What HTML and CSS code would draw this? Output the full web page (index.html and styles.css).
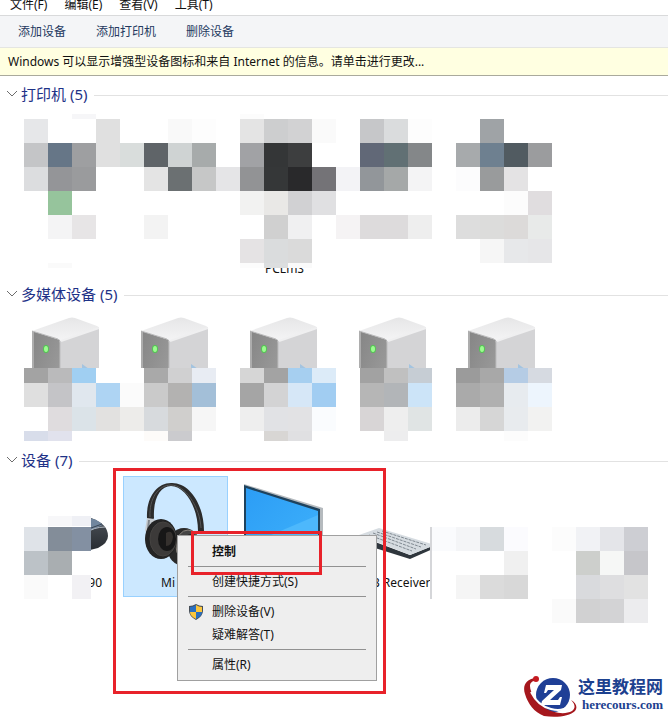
FILE: index.html
```html
<!DOCTYPE html>
<html lang="zh-CN">
<head>
  <meta charset="UTF-8">
  <meta name="viewport" content="width=device-width, initial-scale=1.0">
  <title>设备和打印机</title>
  <link rel="stylesheet" href="styles.css">
</head>
<body>

  <nav class="menubar">
    <button type="button">文件(F)</button>
    <button type="button">编辑(E)</button>
    <button type="button">查看(V)</button>
    <button type="button">工具(T)</button>
  </nav>

  <div class="toolbar">
    <button type="button">添加设备</button>
    <button type="button">添加打印机</button>
    <button type="button">删除设备</button>
  </div>

  <button type="button" class="notice">Windows 可以显示增强型设备图标和来自 Internet 的信息。请单击进行更改...</button>

  <!-- Shared icons -->
  <svg class="defs" aria-hidden="true">
    <defs>
      <linearGradient id="front" x1="0" y1="0" x2="1" y2="1">
        <stop offset="0" stop-color="#858585"/><stop offset="1" stop-color="#a0a0a0"/>
      </linearGradient>
      <linearGradient id="lid" x1="0" y1="0" x2="0" y2="1">
        <stop offset="0" stop-color="#e6e6e7"/><stop offset="1" stop-color="#f4f4f5"/>
      </linearGradient>
      <linearGradient id="screen" x1="0" y1="0" x2="1" y2="1">
        <stop offset="0" stop-color="#2c9df5"/><stop offset="1" stop-color="#3fb2fb"/>
      </linearGradient>
      <linearGradient id="mouse" x1="0" y1="0" x2="0" y2="1">
        <stop offset="0" stop-color="#4b5057"/><stop offset="1" stop-color="#24282d"/>
      </linearGradient>
      <symbol id="tower" viewBox="0 0 105 98">
        <path d="M46 30 85 17V84L46 96Z" fill="#d4d4d6"/>
        <path d="M18 21 55 8Q58 7 61 8L83 16Q85 17 85 18L46 31Z" fill="url(#lid)"/>
        <path d="M18 21 46 30V96L18 84Z" fill="url(#front)"/>
        <path d="M19 22V84" stroke="#adadad" stroke-width="2"/>
        <path d="M18 21 44 29Q46 30 46 33V96" fill="none" stroke="#bcbcbd"/>
        <path d="M47 31 85 18" stroke="#efeff0" stroke-width="2"/>
        <ellipse cx="32" cy="39" rx="3" ry="4" fill="#53c653"/>
        <ellipse cx="32" cy="39" rx="2" ry="3" fill="#9dfc91"/>
        <path d="M68 54 75 59 68 60Z" fill="#a3c4e0"/>
      </symbol>
    </defs>
  </svg>

  <main>
    <section class="group">
      <h2>
        <button type="button" aria-expanded="true">
          <svg class="chevron" viewBox="0 0 12 8"><path d="M1 1 6 6 11 1"/></svg>打印机 (5)
        </button>
      </h2>
      <div class="devices">
        <div class="device"></div>
        <div class="device"></div>
        <div class="device"><div class="icon"></div><span class="label label-long">PCLmS</span></div>
        <div class="device"></div>
        <div class="device"></div>
        <svg class="mosaic" viewBox="0 0 668 170" aria-hidden="true">
          <path d="M24 4H552V158H24Z" fill="#fff"/>
          <g transform="translate(0,4)" class="h5"><rect x="72" fill="#f6f6f8"/><rect x="240" fill="#fcfcfc"/></g>
          <g transform="translate(0,9)">
            <rect x="24" fill="#e6e7e9"/><rect x="96" fill="#e0e0e0"/><rect x="168" fill="#f9f9f9"/><rect x="192" fill="#fdfdfd"/>
            <rect x="240" fill="#e4e4e4"/><rect x="264" fill="#cdcecf"/><rect x="288" fill="#d2d2d3"/><rect x="312" fill="#fafafa"/>
            <rect x="360" fill="#c6c7c9"/><rect x="384" fill="#dadcdd"/><rect x="408" fill="#fdfdfd"/><rect x="480" fill="#9fa3a6"/>
          </g>
          <g transform="translate(0,33)">
            <rect x="24" fill="#c4c5c7"/><rect x="48" fill="#667687"/><rect x="72" fill="#9e9fa1"/><rect x="96" fill="#e0e0e0"/>
            <rect x="120" fill="#d9dddc"/><rect x="144" fill="#5f6468"/><rect x="168" fill="#cfd3d3"/><rect x="192" fill="#a7abab"/>
            <rect x="240" fill="#a1a2a5"/><rect x="264" fill="#343637"/><rect x="288" fill="#3d3e3f"/>
            <rect x="360" fill="#616877"/><rect x="384" fill="#617074"/><rect x="408" fill="#848789"/>
            <rect x="456" fill="#a7aaac"/><rect x="480" fill="#6e8090"/><rect x="504" fill="#515b61"/><rect x="528" fill="#9b9c9e"/>
          </g>
          <g transform="translate(0,57)">
            <rect x="24" fill="#dcdddf"/><rect x="48" fill="#949598"/><rect x="72" fill="#9a9b9d"/><rect x="144" fill="#e4e4e4"/>
            <rect x="168" fill="#6b7072"/><rect x="192" fill="#c6c7c7"/><rect x="216" fill="#e5e5e7"/><rect x="240" fill="#929395"/>
            <rect x="264" fill="#353738"/><rect x="288" fill="#29292b"/><rect x="312" fill="#747377"/><rect x="336" fill="#f3f3f6"/>
            <rect x="360" fill="#92969a"/><rect x="384" fill="#a5a8a8"/><rect x="408" fill="#f4f4f5"/>
            <rect x="456" fill="#fcfcfd"/><rect x="480" fill="#999b9c"/><rect x="504" fill="#e4e3e4"/>
          </g>
          <g transform="translate(0,81)">
            <rect x="48" fill="#96c49c"/><rect x="240" fill="#f2f2f1"/><rect x="264" fill="#e9e8e6"/><rect x="288" fill="#d1d1d3"/>
            <rect x="312" fill="#e0e0e2"/><rect x="504" fill="#fcfcfc"/><rect x="528" fill="#e0dddf"/>
          </g>
          <g transform="translate(0,105)">
            <rect x="48" fill="#f4f4f5"/><rect x="72" fill="#e7e5e6"/><rect x="144" fill="#f3f3f3"/><rect x="264" fill="#d0d0d0"/>
            <rect x="288" fill="#f0f0f1"/><rect x="336" fill="#f5f3f4"/><rect x="360" fill="#dddbdc"/><rect x="384" fill="#dddbdc"/>
            <rect x="408" fill="#eeeeee"/><rect x="456" fill="#dddddd"/><rect x="480" fill="#dcdcdb"/><rect x="504" fill="#dcdad9"/>
            <rect x="528" fill="#e8eae9"/>
          </g>
          <g transform="translate(0,129)">
            <rect x="240" fill="#e5e3e4"/><rect x="264" fill="#dadcdd"/><rect x="288" fill="#dadada"/>
            <rect x="480" fill="#f6f6f6"/><rect x="504" fill="#e7e8ea"/><rect x="528" fill="#e6e6e8"/>
          </g>
          <g transform="translate(0,153)" class="h5"><rect x="48" fill="#fafafa"/><rect x="240" fill="#fcfcfc"/><rect x="264" fill="#dcdedf"/><rect x="288" fill="#fafafa"/></g>
        </svg>
      </div>
    </section>

    <section class="group">
      <h2>
        <button type="button" aria-expanded="true">
          <svg class="chevron" viewBox="0 0 12 8"><path d="M1 1 6 6 11 1"/></svg>多媒体设备 (5)
        </button>
      </h2>
      <div class="devices devices-media">
        <div class="device"><svg class="icon"><use href="#tower"/></svg></div>
        <div class="device"><svg class="icon"><use href="#tower"/></svg></div>
        <div class="device"><svg class="icon"><use href="#tower"/></svg></div>
        <div class="device"><svg class="icon"><use href="#tower"/></svg></div>
        <div class="device"><svg class="icon"><use href="#tower"/></svg></div>
        <svg class="mosaic" viewBox="0 0 668 170" aria-hidden="true">
          <path d="M24 58H552V131H24Z" fill="#fff"/>
          <g transform="translate(0,58)" class="h15">
            <rect x="24" fill="#a3a3a3"/><rect x="48" fill="#bababb"/><rect x="72" fill="#a0cff2"/><rect x="144" fill="#a9a9a9"/>
            <rect x="168" fill="#d0d0d1"/><rect x="192" fill="#e8ecf3"/><rect x="240" fill="#d6d6d6"/><rect x="264" fill="#a3a3a3"/>
            <rect x="288" fill="#a6cff0"/><rect x="312" fill="#dcebf8"/><rect x="360" fill="#a2a2a2"/><rect x="384" fill="#c0c0c0"/>
            <rect x="408" fill="#c6cdd4"/><rect x="456" fill="#9b9b9b"/><rect x="480" fill="#a8a8a8"/><rect x="504" fill="#b5cce5"/>
            <rect x="528" fill="#d6dae1"/>
          </g>
          <g transform="translate(0,73)">
            <rect x="24" fill="#dfdfdf"/><rect x="48" fill="#c4c4c7"/><rect x="72" fill="#e0e7ee"/><rect x="96" fill="#aed4f3"/>
            <rect x="120" fill="#fbfbfb"/><rect x="144" fill="#cacaca"/><rect x="168" fill="#b3b2b1"/><rect x="192" fill="#a3bfd8"/>
            <rect x="240" fill="#a5a5a5"/><rect x="264" fill="#d3d3d4"/><rect x="288" fill="#d6e7f7"/><rect x="312" fill="#a1cdf2"/>
            <rect x="360" fill="#b6b6b6"/><rect x="384" fill="#b2b5b8"/><rect x="408" fill="#cce4f8"/>
            <rect x="456" fill="#aaaaaa"/><rect x="480" fill="#b0b0b0"/><rect x="504" fill="#e7ebef"/><rect x="528" fill="#edf5fd"/>
          </g>
          <g transform="translate(0,97)">
            <rect x="48" fill="#dfdcde"/><rect x="72" fill="#dbe3e8"/><rect x="96" fill="#e2e1e0"/><rect x="120" fill="#edecea"/>
            <rect x="144" fill="#d7dadd"/><rect x="168" fill="#d0cfcd"/><rect x="192" fill="#f6f6f6"/><rect x="240" fill="#eeeeee"/>
            <rect x="264" fill="#e1e2e5"/><rect x="288" fill="#e2e2e4"/><rect x="312" fill="#fafcfe"/><rect x="360" fill="#d8d5d6"/>
            <rect x="384" fill="#eeeeee"/><rect x="408" fill="#e0e4e4"/><rect x="456" fill="#ececec"/><rect x="480" fill="#d6d6d6"/>
            <rect x="504" fill="#e8ebee"/><rect x="528" fill="#f2f2f1"/>
          </g>
          <g transform="translate(0,121)" class="h10">
            <rect x="24" fill="#d8ddea"/><rect x="48" fill="#e1e2ed"/><rect x="144" fill="#fdfbf9"/><rect x="168" fill="#cbcbce"/>
            <rect x="264" fill="#d8d6d4"/><rect x="288" fill="#e0e0e2"/><rect x="384" fill="#ededee"/><rect x="504" fill="#fcfcfc"/>
          </g>
        </svg>
      </div>
    </section>

    <section class="group">
      <h2>
        <button type="button" aria-expanded="true">
          <svg class="chevron" viewBox="0 0 12 8"><path d="M1 1 6 6 11 1"/></svg>设备 (7)
        </button>
      </h2>
      <div class="devices devices-other">
        <div class="device">
          <svg class="icon" viewBox="0 0 105 98">
            <path d="M60 48Q66 42 77 42 94 48 94 60 94 67 84 72L60 78Z" fill="url(#mouse)"/>
            <path d="M70 43Q80 40 89 49L72 56Z" fill="#71869e"/>
            <path d="M72 57Q80 51 91 51" fill="none" stroke="#b4bdc7"/>
            <path d="M77 52 88 48" stroke="#3a4654"/>
          </svg>
          <span class="label label-end">90</span>
        </div>
        <div class="device selected">
          <svg class="icon" viewBox="0 0 105 98">
            <path d="M24 42C23 23 33 7 48 7 66 6 81 28 81 55L75 55C75 31 62 10 48 10 37 10 30 23 31 42L30 44 24 43Z" fill="#2c2c2c"/>
            <path d="M27 41C26 23 35 9 48 9 62 9 77 31 78 52" fill="none" stroke="#565656"/>
            <path d="M24 42 31 43 34 48 24 58 22 54Z" fill="#c7ccd1"/>
            <path d="M26 44 25 53" stroke="#80868c" stroke-width="2"/>
            <ellipse cx="61" cy="71" rx="17" ry="19" fill="#292929"/>
            <ellipse cx="65" cy="70" rx="12" ry="16" fill="#444" stroke="#88837c"/>
            <ellipse cx="68" cy="71" rx="9" ry="13" fill="#222"/>
            <ellipse cx="38" cy="63" rx="16" ry="20" fill="#242424"/>
            <ellipse cx="40" cy="63" rx="13" ry="17" fill="#3c3a39" stroke="#454341"/>
            <ellipse cx="44" cy="63" rx="9" ry="12" fill="#171717"/>
            <path d="M43 57Q49 53 50 61 49 70 43 70Z" fill="#35312e"/>
          </svg>
          <span class="label label-start">Mi</span>
        </div>
        <div class="device">
          <svg class="icon" viewBox="0 0 105 98">
            <path d="M12 8 91 32V90L12 76Z" fill="#b5babe"/>
            <path d="M12 9 88 33V88L12 76Z" fill="#1e425d"/>
            <path d="M14 12 86 35V86L14 75Z" fill="url(#screen)"/>
            <path d="M25 65 86 39V86L14 75V70Z" fill="#4db8fc"/>
          </svg>
        </div>
        <div class="device">
          <svg class="icon" viewBox="0 0 105 98">
            <path d="M18 60 69 79 94 69V72L69 83 18 67Z" fill="#2f363d"/>
            <path d="M18 59 38 52 94 69 69 79Z" fill="#d6dce1"/>
            <path d="M28 59 71 75M32 57 75 73M36 56 80 71M41 55 85 69" stroke="#808991" stroke-dasharray="3 1"/>
          </svg>
          <span class="label">USB Receiver</span>
        </div>
        <svg class="mosaic" viewBox="0 0 668 170" aria-hidden="true">
          <path d="M24 40H91V123H24ZM431 51H528V123H431Z" fill="#fff"/>
          <path d="M430 51H432V123H430Z" fill="#d5d6d9"/>
          <g transform="translate(0,40)" class="h10"><rect x="48" fill="#f7f7f9"/><rect x="72" class="cut" fill="#eff0f5"/></g>
          <g transform="translate(0,51)">
            <rect x="24" fill="#dfe3e8"/><rect x="48" fill="#838d99"/><rect x="72" class="cut" fill="#8390a2"/>
            <rect x="432" fill="#fafbfd"/><rect x="456" fill="#f4f5f7"/><rect x="480" fill="#d7dbde"/><rect x="504" fill="#fbfbfe"/>
            <rect x="552" fill="#fcfcfc"/><rect x="576" fill="#f1f2f5"/><rect x="600" fill="#e4e5e9"/><rect x="624" fill="#cdced3"/>
          </g>
          <g transform="translate(0,75)">
            <rect x="24" fill="#bcc2c7"/><rect x="48" fill="#a9aeb1"/><rect x="504" fill="#f0f0f0"/>
            <rect x="576" fill="#cdcfcc"/><rect x="600" fill="#f6f7f6"/><rect x="624" fill="#c6c6ca"/>
          </g>
          <g transform="translate(0,99)">
            <rect x="24" fill="#fafafa"/><rect x="72" class="cut" fill="#f2f1f4"/>
            <rect x="456" fill="#f5f5f5"/><rect x="480" fill="#dbdbdb"/><rect x="504" fill="#d8d8d8"/>
            <rect x="576" fill="#d9dadd"/><rect x="600" fill="#dedee0"/><rect x="624" fill="#e2e2e2"/>
          </g>
          <g transform="translate(0,123)">
            <rect x="552" fill="#fafafa"/><rect x="576" fill="#d1d1d2"/><rect x="600" fill="#d3d3d5"/><rect x="624" fill="#ececee"/>
          </g>
        </svg>

        <!-- Right-click menu -->
        <div class="context-menu" role="menu">
          <button type="button" role="menuitem" class="default">控制</button>
          <hr>
          <button type="button" role="menuitem">创建快捷方式(S)</button>
          <hr>
          <button type="button" role="menuitem">
            <svg class="shield" viewBox="0 0 14 16">
              <path d="M7 0Q10 2 14 2V7Q14 12 7 16 0 12 0 7V2Q4 2 7 0Z" fill="#474f58"/>
              <path d="M7 1V8H1V3Q4 3 7 1Z" fill="#2a6fc0"/>
              <path d="M7 1Q10 3 13 3V8H7Z" fill="#fbc63c"/>
              <path d="M1 8H7V15Q1 12 1 8Z" fill="#fbc63c"/>
              <path d="M7 8H13Q13 12 7 15Z" fill="#2a6fc0"/>
            </svg>删除设备(V)
          </button>
          <button type="button" role="menuitem">疑难解答(T)</button>
          <hr>
          <button type="button" role="menuitem">属性(R)</button>
        </div>

        <div class="mark mark-outer"></div>
        <div class="mark mark-inner"></div>
      </div>
    </section>
  </main>

  <footer class="brand">
    <svg class="brand-logo" viewBox="0 0 58 42" aria-hidden="true">
      <circle cx="33" cy="20" r="17" fill="#1f3f96"/>
      <path d="M15 3C7 4 2 10 5 19 8 29 14 37 24 41 37 43 50 41 55 36 58 32 56 28 51 25 55 29 56 33 52 36 45 40 33 38 25 33 17 27 10 18 10 11 10 8 12 6 15 6Z" fill="#a5171d"/>
      <path d="M11 17Q18 31 31 34 42 37 49 31" fill="none" stroke="#fff" stroke-width="2"/>
      <circle cx="16" cy="4" r="3" fill="#c41a20"/>
      <path d="M26 10H42L41 15 30 25H38L40 22H42L40 30H21L22 26 34 15H28L26 18H24Z" fill="#fff"/>
    </svg>
    <div class="brand-text">
      <strong>这里教程网</strong>
      <span>herecours.com</span>
    </div>
  </footer>

</body>
</html>
```

FILE: styles.css
```css
* {
  box-sizing: border-box;
}

body {
  margin: 0;
  background: #fff;
  color: #111;
  font-family: 'Noto Sans', 'Noto Sans CJK SC', sans-serif;
  font-size: 12px;
  line-height: 18px;
}

button {
  padding: 0;
  border: none;
  background: none;
  color: inherit;
  font: inherit;
  text-align: left;
  white-space: nowrap;
}

.defs {
  display: block;
  width: 0;
  height: 0;
}

.menubar {
  display: flex;
  align-items: flex-end;
  gap: 17px;
  height: 16px;
  padding: 0 10px 1px;
  border-bottom: 1px solid #d9dadb;
}

.toolbar {
  display: flex;
  align-items: center;
  gap: 30px;
  height: 32px;
  padding: 0 18px;
  background: #f4f5f7;
  border-bottom: 1px solid #e4e5e2;
  color: #24395f;
}

.notice {
  display: block;
  width: 100%;
  height: 28px;
  padding: 0 8px;
  background: #ffffe1;
  border-bottom: 1px solid #aaaa9c;
  overflow: hidden;
}

main {
  padding-top: 4px;
}

.group h2 {
  display: flex;
  align-items: center;
  gap: 7px;
  height: 30px;
  margin: 0;
  padding-left: 6px;
  color: #1e3287;
  font-size: 15px;
  font-weight: normal;
}

.group h2::after {
  content: '';
  flex: 1;
  height: 1px;
  background: #e2e2e2;
}

.group h2 button {
  display: flex;
  align-items: center;
  gap: 3px;
  padding-bottom: 2px;
}

.chevron {
  width: 12px;
  height: 8px;
  fill: none;
  stroke: #6d6d6d;
}

.devices {
  position: relative;
  display: flex;
  align-items: flex-start;
  gap: 4px;
  min-height: 170px;
  padding-left: 14px;
}

.devices-media {
  min-height: 136px;
}

.devices-other {
  min-height: 199px;
}

.device {
  display: flex;
  flex: none;
  flex-direction: column;
  width: 105px;
  min-height: 121px;
}

.device.selected {
  background: #cce8ff;
  box-shadow: inset 0 0 0 1px #99d1ff;
}

.icon {
  display: block;
  width: 105px;
  height: 98px;
}

.label {
  text-align: center;
}

.label-start {
  padding-left: 38px;
  text-align: left;
}

.label-end {
  padding-right: 17px;
  text-align: right;
}

.label-long {
  padding-top: 52px;
}

/* pixelated cover over device names */
.mosaic {
  position: absolute;
  top: 0;
  left: 0;
  width: 668px;
  height: 170px;
  shape-rendering: crispEdges;
  pointer-events: none;
}

.mosaic rect {
  width: 24px;
  height: 24px;
}

.mosaic .h5 rect {
  height: 5px;
}

.mosaic .h10 rect {
  height: 10px;
}

.mosaic .h15 rect {
  height: 15px;
}

.mosaic .cut {
  width: 19px;
}

.context-menu {
  position: absolute;
  top: 59px;
  left: 177px;
  display: flex;
  flex-direction: column;
  width: 200px;
  padding: 4px 0;
  background: #eee;
  border: 1px solid #a0a0a0;
}

.context-menu button {
  display: flex;
  align-items: center;
  height: 23px;
  padding-left: 34px;
}

.context-menu .default {
  font-weight: bold;
}

.context-menu hr {
  width: 178px;
  height: 1px;
  margin: 3px auto;
  border: none;
  background: #919191;
}

.shield {
  width: 14px;
  height: 16px;
  margin-left: -23px;
  margin-right: 9px;
}

.mark {
  position: absolute;
  border: 3px solid #e8222a;
  pointer-events: none;
}

.mark-outer {
  top: -8px;
  left: 113px;
  width: 273px;
  height: 226px;
}

.mark-inner {
  top: 55px;
  left: 191px;
  width: 131px;
  height: 44px;
}

.brand {
  display: flex;
  justify-content: flex-end;
  height: 42px;
  padding-right: 5px;
  color: #1d418f;
}

.brand-logo {
  width: 58px;
  height: 42px;
}

.brand-text {
  display: flex;
  flex-direction: column;
  align-items: flex-end;
  padding-top: 3px;
}

.brand-text strong {
  font-size: 17px;
}

.brand-text span {
  font-family: 'Liberation Serif', serif;
  font-size: 13px;
  font-weight: bold;
}
```
